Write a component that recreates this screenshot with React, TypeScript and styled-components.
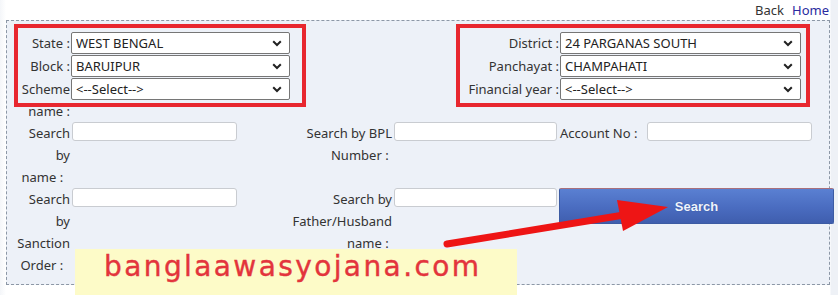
import * as React from 'react';
import styled, { createGlobalStyle } from 'styled-components';

const GlobalStyle = createGlobalStyle`
  html, body {
    margin: 0;
    padding: 0;
    background: #ffffff;
  }
  body {
    font-family: "Noto Sans", "Open Sans", Arial, sans-serif;
    font-size: 13px;
    color: #333;
  }
`;

const Page = styled.div`
  position: relative;
  width: 838px;
  height: 295px;
  overflow: hidden;
  padding-left: 6px;
  box-sizing: border-box;
  background: linear-gradient(to right, #f4f6f9 0, #ffffff 6px, #ffffff 830px, #eef1f6 831px);
`;

const TopLinks = styled.div`
  height: 20px;
  display: flex;
  justify-content: flex-end;
  align-items: center;
  gap: 8px;
  padding-right: 9px;
  font-size: 13px;
`;

const NavLink = styled.a<{ $primary?: boolean }>`
  color: ${p => (p.$primary ? '#2a2aa0' : '#333')};
  text-decoration: none;
`;

const Panel = styled.div`
  position: relative;
  width: 824px;
  box-sizing: border-box;
  border: 1px dashed #8c97a6;
  background: #edf1f8;
  padding: 11px 0 8px 10px;
`;

const TopGrid = styled.div`
  display: grid;
  grid-template-columns: 54px 219px 1fr 241px;
  row-gap: 1px;
  padding-right: 28px;
  align-items: start;
`;

const SearchGrid = styled.div`
  display: grid;
  grid-template-columns: 54px 167px 155px 166px 87px 1fr;
  align-items: start;
`;

const Label = styled.div<{ $max?: number; $left?: boolean }>`
  line-height: 22px;
  text-align: ${p => (p.$left ? 'left' : 'right')};
  justify-self: ${p => (p.$left ? 'start' : 'end')};
  max-width: ${p => (p.$max ? `${p.$max}px` : 'none')};
  padding: ${p => (p.$left ? '0 0 0 1px' : '0 1px 0 0')};
  color: #333;
`;

const SelectWrap = styled.div`
  position: relative;
  height: 22px;
`;

const Select = styled.select`
  appearance: none;
  -webkit-appearance: none;
  width: 100%;
  height: 22px;
  box-sizing: border-box;
  border: 1px solid #767676;
  border-radius: 2px;
  background: #fff;
  font-family: inherit;
  font-size: 13px;
  color: #222;
  padding: 0 20px 0 4px;
  margin: 0;
  outline: none;
`;

const Chevron = styled.svg`
  position: absolute;
  right: 8px;
  top: 8px;
  pointer-events: none;
`;

const TextInput = styled.input<{ $w: number }>`
  width: ${p => p.$w}px;
  height: 19px;
  box-sizing: border-box;
  margin: 0 0 0 1px;
  border: 1px solid #c9ccd1;
  border-radius: 3px;
  background: #fff;
  padding: 0 4px;
  font-family: inherit;
  font-size: 12px;
  outline: none;
`;

const SearchButton = styled.button`
  grid-column: 5 / 7;
  height: 36px;
  margin-right: -5px;
  border: 1px solid #3c5ba3;
  border-top-color: #a9707c;
  border-radius: 2px;
  background: linear-gradient(to bottom, #5a80d2 0%, #4a6cc0 55%, #3f5eae 100%);
  color: #eef4ff;
  font-family: "Liberation Sans", Arial, sans-serif;
  font-weight: bold;
  font-size: 13px;
  text-shadow: 0 0 1px rgba(0, 0, 0, 0.3);
  cursor: pointer;
`;

const RedFrame = styled.div<{ $left: number; $width: number }>`
  position: absolute;
  top: 3px;
  left: ${p => p.$left}px;
  width: ${p => p.$width}px;
  height: 83px;
  box-sizing: border-box;
  border: 4px solid #e8272f;
  pointer-events: none;
`;

const Watermark = styled.div`
  position: absolute;
  left: 75px;
  top: 249px;
  width: 442px;
  height: 46px;
  background: #fdfbc8;
  box-sizing: border-box;
  padding: 1px 0 0 29px;
  font-family: "DejaVu Sans", sans-serif;
  font-size: 28px;
  letter-spacing: 2.4px;
  line-height: 34px;
  color: #e3343c;
  -webkit-text-stroke: 0.4px #e3343c;
`;

const ArrowLayer = styled.svg`
  position: absolute;
  left: 0;
  top: 0;
  pointer-events: none;
`;

const ChevronIcon = () => (
  <Chevron width="10" height="7" viewBox="0 0 10 7">
    <path d="M1.2 1.2 L5 5 L8.8 1.2" fill="none" stroke="#222" strokeWidth="2" />
  </Chevron>
);

const Dropdown: React.FC<{ value: string }> = ({ value }) => (
  <SelectWrap>
    <Select defaultValue={value}>
      <option>{value}</option>
    </Select>
    <ChevronIcon />
  </SelectWrap>
);

export default function App() {
  return (
    <Page>
      <GlobalStyle />
      <TopLinks>
        <NavLink href="#">Back</NavLink>
        <NavLink href="#" $primary>Home</NavLink>
      </TopLinks>

      <Panel>
        <TopGrid>
          <Label>State :</Label>
          <Dropdown value="WEST BENGAL" />
          <Label>District :</Label>
          <Dropdown value="24 PARGANAS SOUTH" />

          <Label>Block :</Label>
          <Dropdown value="BARUIPUR" />
          <Label>Panchayat :</Label>
          <Dropdown value="CHAMPAHATI" />

          <Label>Scheme name&nbsp;:</Label>
          <Dropdown value="<--Select-->" />
          <Label>Financial year :</Label>
          <Dropdown value="<--Select-->" />
        </TopGrid>

        <SearchGrid>
          <Label>Search by name&nbsp;:&nbsp;&nbsp;</Label>
          <TextInput $w={165} />
          <Label $max={120}>Search by BPL Number&nbsp;:&nbsp;</Label>
          <TextInput $w={163} />
          <Label $left>Account No :</Label>
          <TextInput $w={165} />

          <Label>Search by Sanction Order&nbsp;:&nbsp;&nbsp;</Label>
          <TextInput $w={165} />
          <Label $max={120}>Search by Father/Husband name&nbsp;:&nbsp;</Label>
          <TextInput $w={163} />
          <SearchButton>Search</SearchButton>
        </SearchGrid>

        <RedFrame $left={7} $width={292} />
        <RedFrame $left={449} $width={354} />
      </Panel>

      <Watermark>banglaawasyojana.com</Watermark>

      <ArrowLayer width="838" height="295" viewBox="0 0 838 295">
        <line x1="447" y1="244" x2="630" y2="214" stroke="#ee1515" strokeWidth="7" strokeLinecap="round" />
        <polygon points="617,200 668,207 623,231" fill="#ee1515" />
      </ArrowLayer>
    </Page>
  );
}
